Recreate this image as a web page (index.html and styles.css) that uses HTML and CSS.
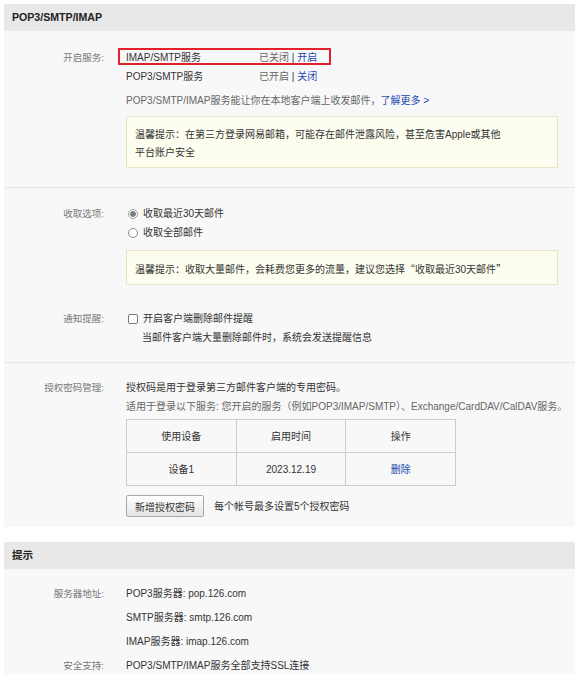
FILE: index.html
```html
<!DOCTYPE html>
<html lang="zh-CN">
<head>
<meta charset="utf-8">
<title>POP3/SMTP/IMAP</title>
<link rel="stylesheet" href="styles.css">
</head>
<body>
<div class="panel">
  <div class="panel-hd">POP3/SMTP/IMAP</div>
  <div class="section s1">
    <div class="field">
      <div class="label">开启服务:</div>
      <div class="content">
        <div class="svc hl"><span class="svc-name">IMAP/SMTP服务</span><span class="svc-state">已关闭 <span class="bar">|</span> <a class="link">开启</a></span></div>
        <div class="svc"><span class="svc-name">POP3/SMTP服务</span><span class="svc-state">已开启 <span class="bar">|</span> <a class="link">关闭</a></span></div>
        <div class="desc">POP3/SMTP/IMAP服务能让你在本地客户端上收发邮件，<a class="link">了解更多 &gt;</a></div>
        <div class="tip tip-two">温馨提示：在第三方登录网易邮箱，可能存在邮件泄露风险，甚至危害Apple或其他<br>平台账户安全</div>
      </div>
    </div>
  </div>
  <div class="section s2">
    <div class="field">
      <div class="label">收取选项:</div>
      <div class="content">
        <div class="opt"><span class="radio checked"></span><span>收取最近30天邮件</span></div>
        <div class="opt"><span class="radio"></span><span>收取全部邮件</span></div>
        <div class="tip tip-one">温馨提示：收取大量邮件，会耗费您更多的流量，建议您选择<span class="cjk">“</span>收取最近30天邮件<span class="cjk">”</span></div>
      </div>
    </div>
    <div class="field notify">
      <div class="label">通知提醒:</div>
      <div class="content">
        <div class="opt"><span class="check"></span><span>开启客户端删除邮件提醒</span></div>
        <div class="sub">当邮件客户端大量删除邮件时，系统会发送提醒信息</div>
      </div>
    </div>
  </div>
  <div class="section s3">
    <div class="field">
      <div class="label">授权密码管理:</div>
      <div class="content">
        <div class="line">授权码是用于登录第三方邮件客户端的专用密码。</div>
        <div class="line gray">适用于登录以下服务: 您开启的服务（例如POP3/IMAP/SMTP）、Exchange/CardDAV/CalDAV服务。</div>
        <table class="auth">
          <tr><td>使用设备</td><td>启用时间</td><td>操作</td></tr>
          <tr><td>设备1</td><td>2023.12.19</td><td><a class="link">删除</a></td></tr>
        </table>
        <div class="actions">
          <button class="btn" type="button">新增授权密码</button>
          <span class="note">每个帐号最多设置5个授权密码</span>
        </div>
      </div>
    </div>
  </div>
</div>

<div class="panel panel2">
  <div class="panel-hd">提示</div>
  <div class="section s4">
    <div class="field">
      <div class="label">服务器地址:</div>
      <div class="content">
        <div class="row">POP3服务器: pop.126.com</div>
        <div class="row">SMTP服务器: smtp.126.com</div>
        <div class="row">IMAP服务器: imap.126.com</div>
      </div>
    </div>
    <div class="field">
      <div class="label">安全支持:</div>
      <div class="content">
        <div class="row">POP3/SMTP/IMAP服务全部支持SSL连接</div>
      </div>
    </div>
  </div>
</div>
</body>
</html>
```

FILE: styles.css
```css
html, body {
  overflow: hidden;
}
body {
  margin: 0;
  padding: 4px 0 0 4px;
  background: #ffffff;
  font-family: "Liberation Sans", "Noto Sans CJK SC", sans-serif;
  font-size: 10px;
  color: #333333;
}
.panel {
  background: #f8f8f8;
}
.panel2 {
  margin-top: 15px;
}
.panel-hd {
  height: 27px;
  line-height: 27px;
  background: #e8e8e8;
  padding-left: 8px;
  font-weight: bold;
  font-size: 10.6px;
  color: #222222;
}
.section {
  border-top: 1px solid #e6e6e6;
}
.panel-hd + .section {
  border-top: none;
}
.s1 {
  padding: 17px 0 19px;
}
.s2 {
  padding: 16px 0 15px;
}
.s3 {
  padding: 15px 0 10px;
}
.s4 {
  padding: 13px 0 20px;
}
.field {
  display: grid;
  grid-template-columns: 100px 1fr;
  column-gap: 22px;
}
.label {
  text-align: right;
  line-height: 19px;
  font-size: 9.5px;
  color: #777777;
}
.s4 .label {
  line-height: 24px;
}
.content {
  line-height: 19px;
}
.svc {
  display: flex;
  position: relative;
  width: 200px;
}
.svc-name {
  width: 133px;
}
.svc-state {
  color: #666666;
}
.bar {
  color: #333333;
}
.svc.hl::after {
  content: "";
  position: absolute;
  left: -8px;
  top: 0;
  width: 213px;
  height: 17px;
  border: 2px solid #e4212b;
  box-sizing: border-box;
}
.link {
  color: #1b48b0;
  text-decoration: none;
}
.desc {
  margin-top: 5px;
  color: #666666;
}
.tip {
  background: #fefef0;
  border: 1px solid #e8e5c6;
  width: 432px;
  box-sizing: border-box;
  padding: 9px 8px 5px;
  line-height: 18px;
  color: #333333;
}
.cjk {
  font-family: "Noto Sans CJK SC", sans-serif;
}
.tip-two {
  margin-top: 6px;
}
.tip-one {
  margin-top: 8px;
}
.opt {
  display: flex;
  align-items: center;
  height: 19px;
}
.radio, .check {
  width: 10px;
  height: 10px;
  box-sizing: border-box;
  margin: 0 5px 0 2px;
  background: #ffffff;
  flex: none;
}
.radio {
  border: 1px solid #8a8a8a;
  border-radius: 50%;
}
.radio.checked {
  border-color: #a0a0a0;
  background: radial-gradient(circle, #808080 0 2.6px, #ffffff 3.2px);
}
.check {
  border: 1px solid #7a7a7a;
  border-radius: 2px;
}
.notify {
  margin-top: 24px;
}
.sub {
  padding-left: 16px;
}
.line {
  white-space: nowrap;
}
.gray {
  color: #666666;
}
.auth {
  margin-top: 3px;
  border-collapse: collapse;
  width: 330px;
}
.auth td {
  border: 1px solid #cccccc;
  height: 32px;
  padding: 0;
  text-align: center;
  width: 33.33%;
}
.actions {
  margin-top: 9px;
  display: flex;
  align-items: center;
}
.btn {
  width: 78px;
  height: 22px;
  border: 1px solid #a8a8a8;
  border-radius: 2px;
  background: linear-gradient(#ffffff, #e4e4e4);
  font-family: inherit;
  font-size: 10px;
  color: #333333;
  padding: 0;
}
.note {
  margin-left: 10px;
}
.row {
  line-height: 24px;
}
```
